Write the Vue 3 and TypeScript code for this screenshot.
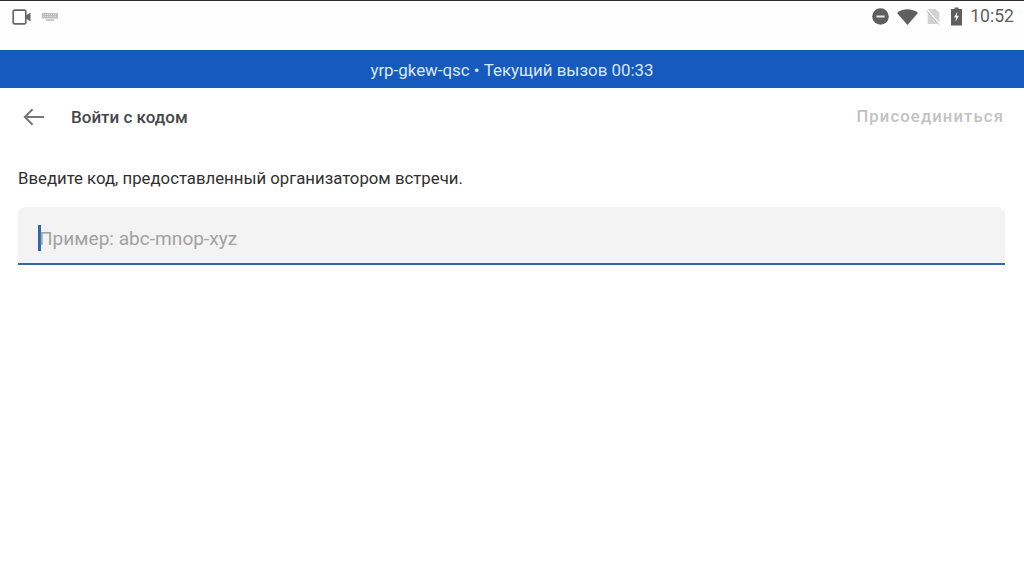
<script setup lang="ts">
const code: string = 'yrp-gkew-qsc'
const elapsed: string = '00:33'
</script>

<template>
  <div class="screen">
    <div class="status">
      <div class="status-side">
        <svg class="ic-video" width="20" height="16" viewBox="0 0 20 16">
          <rect x="1.2" y="1.2" width="12.6" height="13.6" rx="1.2" fill="none" stroke="#666" stroke-width="1.7" />
          <path d="M14 6.5 18.5 3.5V12.5L14 9.5Z" fill="#666" />
        </svg>
        <svg class="ic-kbd" width="18" height="12" viewBox="0 0 18 12">
          <rect x="1" y="2" width="16" height="5.5" fill="#bbb" />
          <path d="M2 3.5h14M2 5.5h14" stroke="#eee" stroke-width=".7" stroke-dasharray="1.2 .8" />
          <rect x="5" y="8.5" width="8" height="1.2" fill="#aaa" />
        </svg>
      </div>
      <div class="status-side right">
        <svg width="17" height="17" viewBox="0 0 17 17">
          <circle cx="8.5" cy="8.5" r="8.3" fill="#5f5f5f" />
          <rect x="4.4" y="7.5" width="8.2" height="2" fill="#e8e8e8" />
        </svg>
        <svg class="ic-wifi" width="21" height="16" viewBox="0 0 20 15">
          <path d="M0 3.6C5.6-1 14.4-1 20 3.6L10 15Z" fill="#5f5f5f" />
        </svg>
        <svg class="ic-sim" width="15" height="17" viewBox="0 0 14 16">
          <path d="M1.5 1H9L12.5 4.5V15H1.5Z" fill="#d2d2d2" />
          <path d="M0.5 1 13 15.5" stroke="#fff" stroke-width="1.4" />
          <path d="M0.5 2.4 12 15.5" stroke="#bdbdbd" stroke-width=".9" />
        </svg>
        <svg class="ic-batt" width="11" height="19" viewBox="0 0 11 18">
          <path d="M3.5 0h4v1.6H11V18H0V1.6h3.5Z" fill="#5f5f5f" />
          <path d="M6.4 4 3 10h2.2L4.4 14.6 8 8.2H5.7Z" fill="#f2f2f2" />
        </svg>
        <span class="time">10:52</span>
      </div>
    </div>

    <div class="call-bar">{{ code }} • Текущий вызов {{ elapsed }}</div>

    <header class="toolbar">
      <div class="toolbar-left">
        <svg class="back" width="22" height="18" viewBox="0 0 22 18">
          <path d="M21 9H2M9.6 1.2 1.8 9l7.8 7.8" fill="none" stroke="#777" stroke-width="2" />
        </svg>
        <span class="title">Войти с кодом</span>
      </div>
      <span class="join">Присоединиться</span>
    </header>

    <main class="content">
      <p class="hint">Введите код, предоставленный организатором встречи.</p>
      <div class="field">
        <span class="caret"></span>
        <span class="placeholder">Пример: abc-mnop-xyz</span>
      </div>
    </main>
  </div>
</template>

<style scoped>
.screen {
  width: 1024px;
  height: 578px;
  display: flex;
  flex-direction: column;
  background: #fff;
  font-family: Roboto, "Noto Sans", sans-serif;
  overflow: hidden;
}
.status {
  height: 50px;
  box-sizing: border-box;
  border-top: 1px solid #2b2b2b;
  padding: 6px 10px 0 12px;
  display: flex;
  justify-content: space-between;
  align-items: flex-start;
  background: #fefefe;
}
.status-side {
  display: flex;
  align-items: center;
  height: 19px;
}
.ic-kbd { margin-left: 9px; }
.ic-wifi { margin-left: 8px; }
.ic-sim { margin-left: 8px; }
.ic-batt { margin-left: 10px; }
.time {
  margin-left: 8px;
  font-size: 17.6px;
  color: #5f5f5f;
  line-height: 19px;
}
.call-bar {
  height: 38px;
  line-height: 40px;
  background: #175abd;
  color: #d9e8fb;
  font-size: 16.9px;
  text-align: center;
}
.toolbar {
  height: 57px;
  padding: 0 20px 0 23px;
  display: flex;
  align-items: center;
  justify-content: space-between;
}
.toolbar-left {
  display: flex;
  align-items: center;
}
.title {
  margin-left: 26px;
  font-size: 17px;
  font-weight: 500;
  color: #45484a;
}
.join {
  font-size: 16.6px;
  font-weight: 500;
  letter-spacing: 1.15px;
  color: #c2c2c2;
}
.content {
  padding: 0 19px 0 18px;
}
.hint {
  margin: 0;
  padding-top: 23px;
  font-size: 16.75px;
  line-height: 20px;
  color: #303030;
}
.field {
  margin-top: 19px;
  height: 58px;
  box-sizing: border-box;
  background: #f3f3f3;
  border-radius: 8px 8px 0 0;
  border-bottom: 2px solid #2f66ad;
  padding: 6px 20px 0;
  display: flex;
  align-items: center;
}
.caret {
  width: 3px;
  height: 26px;
  background: #2f66ad;
  flex: none;
}
.placeholder {
  font-size: 19.1px;
  margin-left: -2px;
  color: #a2a2a2;
}
</style>
